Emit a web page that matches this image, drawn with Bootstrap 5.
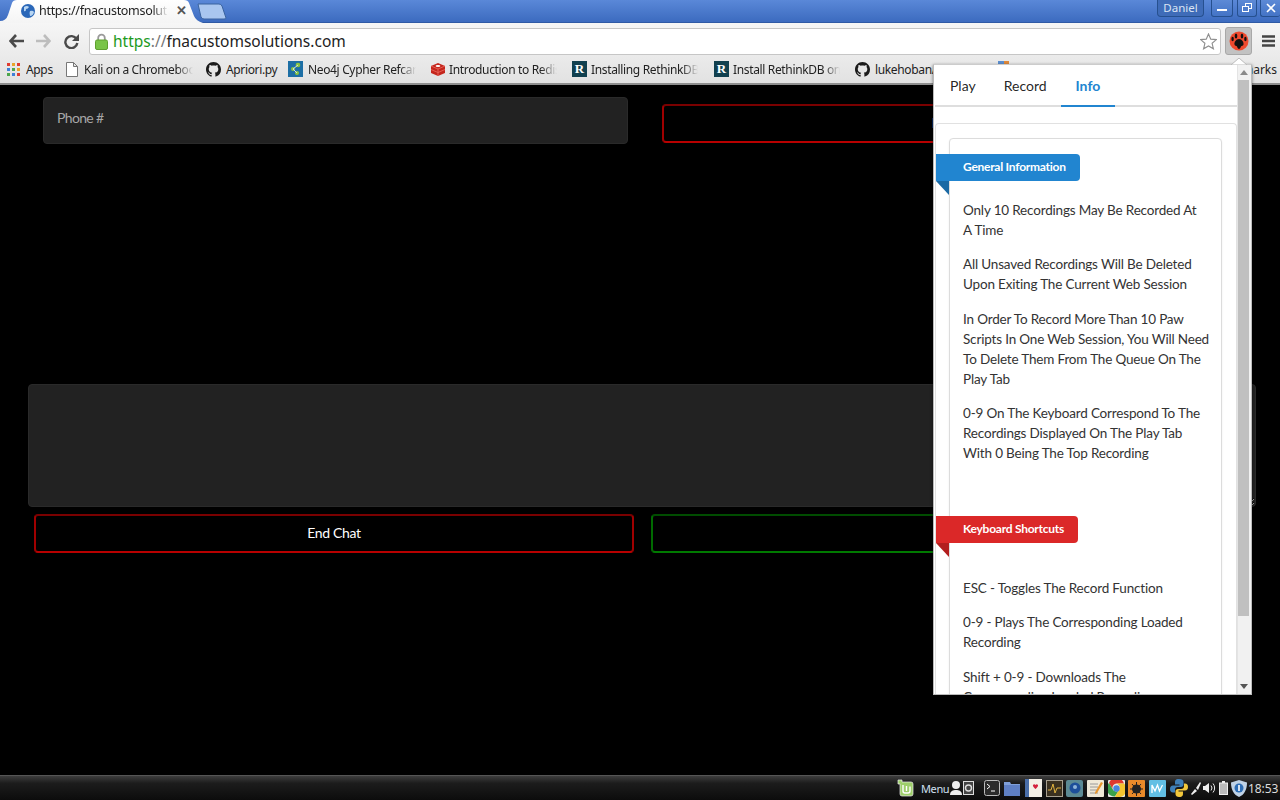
<!DOCTYPE html>
<html lang="en">
<head>
<meta charset="utf-8">
<title>fnacustomsolutions</title>
<link href="https://cdn.jsdelivr.net/npm/bootstrap@5.3.0/dist/css/bootstrap.min.css" rel="stylesheet">
<style>
html,body{height:800px;overflow:hidden;background:#000;}
body{font-family:"Lato",sans-serif;position:relative;width:1280px;}
.win-strip{height:23px;background:linear-gradient(#5a88d8,#3c6bbf);border-bottom:1px solid #2f5aa5;position:relative;}
.tab-shape{position:absolute;left:0;top:0;}
.tab-fav{margin-left:21px;margin-top:4px;}
.tab-title{font:12.5px "Noto Sans",sans-serif;color:#222;width:129px;white-space:nowrap;overflow:hidden;margin-left:4px;line-height:22px;letter-spacing:-.3px;-webkit-mask-image:linear-gradient(90deg,#000 88%,transparent);mask-image:linear-gradient(90deg,#000 88%,transparent);}
.tab-x{font:13px "Noto Sans",sans-serif;color:#555;margin-left:8px;line-height:21px;font-weight:700;}
.tab-inner{position:relative;z-index:1;}
.newtab{position:relative;z-index:1;margin-left:10px;margin-top:3px;}
.profile{width:47px;height:17px;border:1px solid #26508f;border-top:0;border-radius:0 0 4px 4px;background:#3f6cb8;color:#dbe4f3;font:11.5px "Noto Sans",sans-serif;text-align:center;line-height:16px;margin-right:7px;}
.winbtn{width:20px;height:17px;border:1px solid #26508f;border-top:0;border-radius:0 0 3px 3px;background:linear-gradient(#5d8ad6,#4474c6);color:#fff;margin-right:3px;}
.winbtn.wb-min{width:22px;margin-right:4px;}
.winbtn:last-child{margin-right:0;border-right:0;}
.toolbar{height:32px;background:linear-gradient(#f6f6f6,#ebebeb);padding:4px 0 0 9px;}
.toolbar svg.nv{flex:none;}
.nv-a{margin-right:12px;}
.nv-b{margin-right:13px;}
.omni{width:1132px;height:27px;margin-left:10px;background:#fff;border:1px solid #c6c6c6;border-radius:3px;font:15.5px "Noto Sans",sans-serif;line-height:25px;color:#222;padding-left:5px;}
.url-txt{margin-left:5px;}
.url-g{color:#1d9a1d;}
.url-m{color:#777;}
.star-ico{margin-left:auto;margin-right:3px;}
.paw-btn{width:27px;height:28px;margin-left:4px;background:#c2c2c2;border:1px solid #a8a8a8;border-radius:3px;}
.burger{margin-left:10px;}
.bmarks{height:30px;background:linear-gradient(#ebebeb,#e2e2e2);border-bottom:2px solid #8e8e8e;font:12px "Noto Sans",sans-serif;color:#222;padding-left:7px;position:relative;white-space:nowrap;}
.bm{display:flex;align-items:center;flex:none;}
.bm span.lbl{display:block;overflow:hidden;margin-left:5px;letter-spacing:-.35px;}
.bm span.lbl.m6{margin-left:6px;}
.bm span.lbl.m4{margin-left:4px;}
.bm span.lbl.m3{margin-left:3px;}
.b59{width:59px;}.b140{width:140px;}.b82{width:82px;}.b142{width:142px;}.b141{width:141px;}.b143{width:143px;}
.l109{width:109px;}.l108{width:108px;}.l107{width:107px;}.l52{width:52px;}
.fadeout{-webkit-mask-image:linear-gradient(90deg,#000 85%,transparent);mask-image:linear-gradient(90deg,#000 85%,transparent);}
.rk{width:15px;height:16px;background:#11404f;color:#fff;font:700 13px/16px "Liberation Serif",serif;text-align:center;flex:none;}
.bm-end{position:absolute;right:3px;top:6px;}
.pg{height:690px;background:#000;padding-top:12px;}
.row-a{padding-left:43px;}
.ph-input.form-control{width:585px;height:47px;flex:none;background:#222;border:1px solid #2a2a2a;border-radius:4px;color:#aaa;font-size:14px;letter-spacing:-.65px;padding:0 13px 6px;box-shadow:none;}
.ph-input.form-control::placeholder{color:#a6a6a6;opacity:1;}
.out-btn{background:#000;color:#fff;border-radius:4px;height:39px;font-size:14px;letter-spacing:-.35px;padding:0 0 2px;}
.out-red{border:2px solid #a00000;border-top-color:#7a0000;border-bottom-color:#b80000;}
.out-green{border:2px solid #006a00;border-top-color:#004c00;border-bottom-color:#007a00;}
.out-red.w-top{padding-left:14px;}
.w-top{width:590px;margin-left:34px;margin-top:7px;}
.w-bot{width:600px;}
.msg.form-control{display:block;margin-left:28px;margin-top:240px;width:1228px;height:123px;background:#222;border:1px solid #2a2a2a;border-radius:4px;}
.row-b{padding-left:34px;margin-top:7px;gap:17px;}
.taskbar{height:25px;background:linear-gradient(#3d3d3d,#1c1c1c 30%,#0c0c0c);border-top:1px solid #555;color:#e8e8e8;font:12px "Noto Sans",sans-serif;padding-right:3px;}
.ti{flex:none;margin-right:4px;}
.ti.r1{margin-right:1px;}.ti.r2{margin-right:2px;}.ti.r3{margin-right:3px;}.ti.r5{margin-right:5px;}.ti.r7{margin-right:7px;}.ti.r10{margin-right:10px;}
.t-menu{color:#cfe0f2;font-size:11px;letter-spacing:-.4px;width:29px;flex:none;}
.t-clock{color:#ddd;white-space:nowrap;width:29px;letter-spacing:-.1px;}
.popup{position:absolute;left:933px;top:64px;width:319px;height:631px;background:#fff;border:1px solid #bbb;border-top-color:#ccc;box-shadow:0 1px 3px rgba(0,0,0,.5);z-index:5;}
.nib{position:absolute;left:1231px;top:58px;z-index:6;}
.pop-main{width:304px;overflow:hidden;height:100%;}
.pop-tabs.nav{height:42px;border-bottom:2px solid #dedede;margin:0 0 16px 1px;padding-left:0;font-size:14px;}
.pop-tabs .nav-link{color:rgba(0,0,0,.87);padding:10px 15px 0;height:42px;font-size:14px;}
.pop-tabs .nav-link.t-play{padding-right:14px;}
.pop-tabs .nav-link.t-rec{padding-left:14px;padding-right:14px;}
.pop-tabs .nav-link.active-x{color:#2185d0;border-bottom:2px solid #2185d0;font-weight:700;}
.outer-c{border:1px solid #e1e1e1;border-bottom:0;border-radius:4px 4px 0 0;padding:14px 14px 0 13px;height:700px;width:302px;margin-left:1px;}
.inner-c.card{border:1px solid #dcdcdc;border-radius:4px;box-shadow:0 1px 2px rgba(0,0,0,.08);padding:15px 13px 0;height:640px;width:273px;}
.inner-c p{font-size:13.5px;letter-spacing:-.17px;line-height:20px;color:#333;margin:0 0 14.3px;white-space:nowrap;}
.rib{display:inline-block;position:relative;font-size:12px;letter-spacing:-.25px;font-weight:700;color:#fff;line-height:26px;height:27px;padding:0 14px 0 27px;margin-left:-27px;border-radius:0 4px 4px 0;align-self:flex-start;}
.rib::after{content:"";position:absolute;left:0;top:100%;border-style:solid;border-width:0 13px 14px 0;border-color:transparent;}
.rib-b{background:#2185d0;}
.rib-b::after{border-right-color:#1a69a4;}
.rib-r{background:#db2828;}
.rib-r::after{border-right-color:#b21e1e;}
.gap-a{margin-bottom:19px;}
.gap-b{margin-top:39px;margin-bottom:35px;}
.sbar{width:14px;background:#f1f1f1;height:100%;border-left:1px solid #e4e4e4;padding:0 2px 0 0;}
.s-thumb{height:536px;background:#c0c0c0;}
.s-ar{height:15px;display:flex;align-items:center;justify-content:center;}
</style>
</head>
<body>
<svg width="0" height="0" class="position-absolute">
<symbol id="gh" viewBox="0 0 16 16"><path fill="#1b1b1b" d="M8 0C3.58 0 0 3.58 0 8c0 3.54 2.29 6.53 5.47 7.59.4.07.55-.17.55-.38 0-.19-.01-.82-.01-1.49-2.01.37-2.53-.49-2.69-.94-.09-.23-.48-.94-.82-1.13-.28-.15-.68-.52-.01-.53.63-.01 1.08.58 1.23.82.72 1.21 1.87.87 2.33.66.07-.52.28-.87.51-1.07-1.78-.2-3.64-.89-3.64-3.95 0-.87.31-1.59.82-2.15-.08-.2-.36-1.02.08-2.12 0 0 .67-.21 2.2.82.64-.18 1.32-.27 2-.27.68 0 1.36.09 2 .27 1.53-1.04 2.2-.82 2.2-.82.44 1.1.16 1.92.08 2.12.51.56.82 1.27.82 2.15 0 3.07-1.87 3.75-3.65 3.95.29.25.54.73.54 1.48 0 1.07-.01 1.93-.01 2.2 0 .21.15.46.55.38A8.013 8.013 0 0016 8c0-4.42-3.58-8-8-8z"/></symbol>
</svg>

<!-- tab strip -->
<div class="win-strip d-flex align-items-start justify-content-between">
  <svg class="tab-shape" width="205" height="23"><path d="M0 21 Q6 21 8 15 L12 3 Q13 0 17 0 L184 0 Q188 0 189 3 L194 16 Q196 21 203 23 L0 23Z" fill="url(#tg)"/><defs><linearGradient id="tg" x1="0" y1="0" x2="0" y2="1"><stop offset="0" stop-color="#fff"/><stop offset="1" stop-color="#f4f4f4"/></linearGradient></defs></svg>
  <div class="tab-inner d-flex align-items-start">
    <svg class="tab-fav" width="14" height="14" viewBox="0 0 14 14"><circle cx="7" cy="7" r="7" fill="#2a67b8"/><path d="M3 3 Q6 1 8 3 Q7 5 5 5 Q5 8 3 7Z M9 7 Q12 6 13 8 Q12 12 9 12 Q8 9 9 7Z" fill="#b9d6f2"/></svg>
    <div class="tab-title">https://fnacustomsolutions.com</div>
    <div class="tab-x">✕</div>
    <svg class="newtab" width="30" height="17" viewBox="0 0 30 17"><path d="M1 1 L22 1 Q24 1 25 3 L29 15 Q29 16 27 16 L7 16 Q5 16 4 14Z" fill="#a9c6ef" stroke="#3a639f"/></svg>
  </div>
  <div class="d-flex align-items-start">
    <div class="profile">Daniel</div>
    <div class="winbtn wb-min d-flex align-items-center justify-content-center"><svg width="10" height="10"><rect x="0" y="6" width="10" height="2" fill="#fff"/></svg></div>
    <div class="winbtn d-flex align-items-center justify-content-center"><svg width="11" height="10" fill="none" stroke="#fff"><rect x="3.5" y=".5" width="6" height="5"/><rect x=".5" y="3.5" width="6" height="5" fill="#4f7dcc"/></svg></div>
    <div class="winbtn d-flex align-items-center justify-content-center"><svg width="10" height="10" stroke="#fff" stroke-width="1.6"><path d="M1 1L9 9M9 1L1 9"/></svg></div>
  </div>
</div>

<!-- toolbar -->
<div class="toolbar d-flex align-items-center">
  <svg class="nv nv-a" width="15" height="14" viewBox="0 0 15 14"><path d="M7 1L1.5 7 7 13M2 7H15" fill="none" stroke="#4a4a4a" stroke-width="2.6"/></svg>
  <svg class="nv nv-b" width="15" height="14" viewBox="0 0 15 14"><path d="M8 1l5.500 6L8 13M13 7H0" fill="none" stroke="#bdbdbd" stroke-width="2.6"/></svg>
  <svg class="nv" width="15" height="15" viewBox="0 0 15 15"><path d="M12.5 5A6 6 0 1 0 13.3 9" fill="none" stroke="#4a4a4a" stroke-width="2.4"/><path d="M15 0v7H8z" fill="#4a4a4a"/></svg>
  <div class="omni d-flex align-items-center">
    <svg width="13" height="17" viewBox="0 0 13 17"><path d="M3.2 8V5a3.3 3.3 0 0 1 6.6 0v3" fill="none" stroke="#9a9a9a" stroke-width="1.8"/><rect x="0.5" y="7" width="12" height="9.5" rx="1.5" fill="#79c447" stroke="#5fa02f"/></svg>
    <span class="url-txt"><span class="url-g">https</span><span class="url-m">://</span>fnacustomsolutions.com</span>
    <svg class="star-ico" width="17" height="17" viewBox="0 0 18 18"><path d="M9 1l2.400 5.500 6 .5-4.600 3.900 1.400 5.800L9 13.700 3.800 16.700l1.400-5.800L.6 7l6-.5z" fill="#fff" stroke="#8f8f8f" stroke-width="1.2"/></svg>
  </div>
  <div class="paw-btn d-flex align-items-center justify-content-center">
    <svg width="20" height="20" viewBox="0 0 20 20"><circle cx="10" cy="10" r="9.5" fill="#ef4a2e"/><g fill="#111"><ellipse cx="3.6" cy="8" rx="1.2" ry="2.2"/><ellipse cx="7" cy="5" rx="1.3" ry="2.6"/><ellipse cx="13" cy="5" rx="1.3" ry="2.6"/><ellipse cx="16.4" cy="8" rx="1.2" ry="2.2"/><path d="M10 8c3 0 5 3.400 4.500 5.500-.4 1.700-2 1-2.500 2-.5 1.500-1.200 2.500-2 2.500s-1.500-1-2-2.500c-.5-1-2.100-.3-2.500-2C5 11.400 7 8 10 8z"/></g></svg>
  </div>
  <svg class="burger" width="13" height="12"><path d="M0 1.500h13M0 6h13M0 10.500h13" stroke="#444" stroke-width="2.400"/></svg>
</div>

<!-- bookmarks -->
<div class="bmarks d-flex align-items-center">
  <div class="bm b59"><svg width="13" height="13" viewBox="0 0 13 13"><g><rect x="0" y="0" width="3" height="3" fill="#e03c31"/><rect x="5" y="0" width="3" height="3" fill="#e8a52a"/><rect x="10" y="0" width="3" height="3" fill="#e03c31"/><rect x="0" y="5" width="3" height="3" fill="#3e7fd8"/><rect x="5" y="5" width="3" height="3" fill="#4ca64c"/><rect x="10" y="5" width="3" height="3" fill="#e8a52a"/><rect x="0" y="10" width="3" height="3" fill="#4ca64c"/><rect x="5" y="10" width="3" height="3" fill="#3e7fd8"/><rect x="10" y="10" width="3" height="3" fill="#e03c31"/></g></svg><span class="lbl m6">Apps</span></div>
  <div class="bm b140"><svg width="12" height="15" viewBox="0 0 12 15"><path d="M.5.500h7l4 4v10H.5z M7.500.500v4h4" fill="#fff" stroke="#777"/></svg><span class="lbl fadeout l109 m6">Kali on a Chromebook</span></div>
  <div class="bm b82"><svg width="15" height="15"><use href="#gh"/></svg><span class="lbl l52">Apriori.py</span></div>
  <div class="bm b142"><svg width="15" height="16" viewBox="0 0 15 16"><rect width="15" height="16" fill="#1d6fa5"/><circle cx="10" cy="4" r="2.300" fill="#8bc53f"/><circle cx="5" cy="8" r="2" fill="#8bc53f"/><circle cx="9" cy="12" r="2" fill="#8bc53f"/><path d="M10 4L5 8l4 4" stroke="#cde" fill="none"/></svg><span class="lbl fadeout l108">Neo4j Cypher Refcard</span></div>
  <div class="bm b142"><svg width="16" height="15" viewBox="0 0 16 15"><path d="M8 1l7 3v7l-7 3-7-3V4z" fill="#c4261d"/><path d="M1 4l7 3 7-3M1 7.500l7 3 7-3M8 7v7" fill="none" stroke="#ee6a5f" stroke-width=".8"/><ellipse cx="8" cy="4" rx="2.400" ry="1" fill="#fff"/></svg><span class="lbl fadeout l108 m3">Introduction to Redis</span></div>
  <div class="bm b142"><div class="rk">R</div><span class="lbl fadeout l107 m4">Installing RethinkDB on</span></div>
  <div class="bm b141"><div class="rk">R</div><span class="lbl fadeout l107 m4">Install RethinkDB on</span></div>
  <div class="bm b143"><svg width="15" height="15"><use href="#gh"/></svg><span class="lbl">lukehoban/</span></div>
  <div class="bm"><svg width="11" height="16" viewBox="0 0 11 16"><rect width="11" height="16" fill="#5b8fd0"/><rect x="6" width="5" height="3" fill="#e08a3c"/></svg></div>
  <div class="bm-end">Other Bookmarks</div>
</div>

<!-- page -->
<div class="pg">
  <div class="row-a d-flex align-items-start">
    <input class="form-control ph-input" type="text" placeholder="Phone #">
    <button class="btn out-btn out-red w-top" type="button">Initiate Call</button>
  </div>
  <textarea class="form-control msg" aria-label="Message"></textarea>
  <div class="row-b d-flex">
    <button class="btn out-btn out-red w-bot" type="button">End Chat</button>
    <button class="btn out-btn out-green w-bot" type="button">Send</button>
  </div>
</div>

<!-- taskbar -->
<div class="taskbar d-flex align-items-center justify-content-end">
  <svg class="ti r7" width="17" height="18" viewBox="0 0 17 18"><path d="M1 1h4v2h9a2 2 0 0 1 2 2v10a2 2 0 0 1-2 2H5a2 2 0 0 1-2-2V5H1z" fill="#9ecf6b" stroke="#eee" stroke-width=".7"/><path d="M6 6v6a2 2 0 0 0 2 2h3a2 2 0 0 0 2-2V7.500M9.500 7v5" fill="none" stroke="#fff" stroke-width="1.400"/></svg>
  <span class="t-menu">Menu</span>
  <svg class="ti r1" width="12" height="16" viewBox="0 0 12 16"><circle cx="6" cy="5" r="4" fill="#eee"/><path d="M0 15c0-4 3-5 6-5s6 1 6 5z" fill="#eee"/></svg>
  <svg class="ti r10" width="11" height="14" viewBox="0 0 11 14"><rect x=".5" y=".5" width="10" height="13" fill="#444" stroke="#ddd"/><circle cx="5.500" cy="7" r="3" fill="none" stroke="#ddd" stroke-width="1.400"/></svg>
  <svg class="ti" width="16" height="16" viewBox="0 0 16 16"><rect x=".5" y=".5" width="15" height="15" rx="2" fill="#2b2b2b" stroke="#bbb"/><path d="M3 4l3 2.500L3 9M7 11h4" stroke="#fff" fill="none"/></svg>
  <svg class="ti r5" width="16" height="15" viewBox="0 0 16 15"><path d="M0 1h6l1 2h9v12H0z" fill="#7f9fd8"/><rect y="4" width="16" height="11" fill="#5f80c4"/></svg>
  <svg class="ti" width="17" height="18" viewBox="0 0 17 18"><rect width="17" height="18" fill="#f3efe6"/><rect width="4" height="18" fill="#4a6ea8"/><path d="M10.500 6c-1-1.500-3-.5-2.500 1 .4 1.300 2.500 3 2.500 3s2-1.700 2.500-3c.4-1.500-1.500-2.500-2.500-1z" fill="#d4213d"/></svg>
  <svg class="ti r3" width="17" height="17" viewBox="0 0 17 17"><rect x=".5" y=".5" width="16" height="16" fill="#3b3120" stroke="#a8a090"/><path d="M2 10h3l2-6 2 9 2-5h4" fill="none" stroke="#e0b23e"/></svg>
  <svg class="ti" width="17" height="17" viewBox="0 0 17 17"><rect width="17" height="17" rx="2" fill="#5c8a94"/><circle cx="9" cy="8" r="5.500" fill="#1d4f9a"/><circle cx="9" cy="7" r="2" fill="#8fb4d8"/></svg>
  <svg class="ti" width="17" height="17" viewBox="0 0 17 17"><rect width="17" height="17" rx="1" fill="#efe9d8"/><path d="M3 4h8M3 7h8M3 10h8M3 13h8" stroke="#9a9a9a"/><path d="M14 2l2 1-6 10-2 1 .2-2z" fill="#e8962e"/></svg>
  <svg class="ti r3" width="17" height="17" viewBox="0 0 17 17"><rect width="17" height="17" rx="1" fill="#e8e8e8"/><path d="M8.500 3.500H16a8 8 0 0 0-15-.5l3.500 6a4.500 4.500 0 0 1 4-5.500z" fill="#e0392f"/><path d="M1 3a8 8 0 0 0 6 13.500L10.500 11A4.500 4.500 0 0 1 4.500 9z" fill="#3aa14a"/><path d="M16 3.500H8.500a4.500 4.500 0 0 1 2 7.500L7 16.500A8 8 0 0 0 16 3.500z" fill="#f4c430"/><circle cx="8.500" cy="8.500" r="3.200" fill="#4a86dd"/></svg>
  <svg class="ti" width="17" height="17" viewBox="0 0 17 17"><rect width="17" height="17" rx="1" fill="#e98a2a"/><circle cx="8.500" cy="9" r="4.500" fill="#222"/><path d="M8.500 2v14M2 9h13M4 4l9 10M13 4l-9 10" stroke="#222"/></svg>
  <svg class="ti" width="17" height="17" viewBox="0 0 17 17"><rect width="17" height="17" rx="1" fill="#62bfe4"/><path d="M3 13V5l3 6 2.500-6 2 6 3-6" fill="none" stroke="#fff" stroke-width="1.300"/></svg>
  <svg class="ti r2" width="18" height="20" viewBox="0 0 18 18"><path d="M9 0C5 0 5 2 5 4v1.500h4.500V6.500H3C1 6.500 0 8 0 10s1 3.500 3 3.500h2V11c0-2 1-3 3-3h3c1.500 0 2.500-1 2.500-2.500V3C13.500 1 12 0 9 0z" fill="#3e7fb8"/><path d="M9 18c4 0 4-2 4-4v-1.500H8.500v-1H15c2 0 3-1.500 3-3.500s-1-3.500-3-3.500h-1V7c0 2-1 3-3 3H8c-1.500 0-2.500 1-2.500 2.500V15c0 2 1.500 3 3.500 3z" fill="#f2c83c"/></svg>
  <svg class="ti r1" width="12" height="14" viewBox="0 0 12 14"><path d="M1 13l4-5 2 2-5 4zM6 7l4-6 1 1-3 7z" fill="#eee"/></svg>
  <svg class="ti r3" width="13" height="12" viewBox="0 0 13 12"><path d="M0 4h2l4-3v10L2 8H0z" fill="#eee"/><path d="M8 3.500a4 4 0 0 1 0 5M10 1.500a7 7 0 0 1 0 9" fill="none" stroke="#eee"/></svg>
  <svg class="ti r3" width="9" height="14" viewBox="0 0 9 14"><rect x=".5" y="2" width="8" height="11.500" fill="#bbb" stroke="#eee"/><rect x="3" y="0" width="3" height="2" fill="#eee"/></svg>
  <svg class="ti r1" width="16" height="17" viewBox="0 0 16 17"><path d="M8 0l8 2.500C16 10 13 15 8 17 3 15 0 10 0 2.500z" fill="#bfd2e6"/><circle cx="8" cy="8" r="4.500" fill="#2d6db5"/><rect x="7.200" y="5" width="1.600" height="6" fill="#fff"/></svg>
  <span class="t-clock">18:53</span>
</div>

<!-- extension popup -->
<svg class="nib" width="16" height="7" viewBox="0 0 16 7"><path d="M0 7L8 0l8 7z" fill="#fff" stroke="#bbb"/></svg>
<div class="popup d-flex">
  <div class="pop-main">
    <ul class="nav pop-tabs">
      <li class="nav-item"><a class="nav-link t-play" href="#">Play</a></li>
      <li class="nav-item"><a class="nav-link t-rec" href="#">Record</a></li>
      <li class="nav-item"><a class="nav-link active-x" href="#">Info</a></li>
    </ul>
    <div class="outer-c">
      <div class="card inner-c">
        <span class="rib rib-b gap-a">General Information</span>
        <p>Only 10 Recordings May Be Recorded At<br>A Time</p>
        <p>All Unsaved Recordings Will Be Deleted<br>Upon Exiting The Current Web Session</p>
        <p>In Order To Record More Than 10 Paw<br>Scripts In One Web Session, You Will Need<br>To Delete Them From The Queue On The<br>Play Tab</p>
        <p>0-9 On The Keyboard Correspond To The<br>Recordings Displayed On The Play Tab<br>With 0 Being The Top Recording</p>
        <span class="rib rib-r gap-b">Keyboard Shortcuts</span>
        <p>ESC - Toggles The Record Function</p>
        <p>0-9 - Plays The Corresponding Loaded<br>Recording</p>
        <p>Shift + 0-9 - Downloads The<br>Corresponding Loaded Recording</p>
      </div>
    </div>
  </div>
  <div class="sbar d-flex flex-column">
    <div class="s-ar"><svg width="8" height="5"><path d="M0 5L4 0l4 5z" fill="#8a8a8a"/></svg></div>
    <div class="s-thumb"></div>
    <div class="flex-grow-1"></div>
    <div class="s-ar"><svg width="8" height="5"><path d="M0 0l4 5 4-5z" fill="#555"/></svg></div>
  </div>
</div>
</body>
</html>
